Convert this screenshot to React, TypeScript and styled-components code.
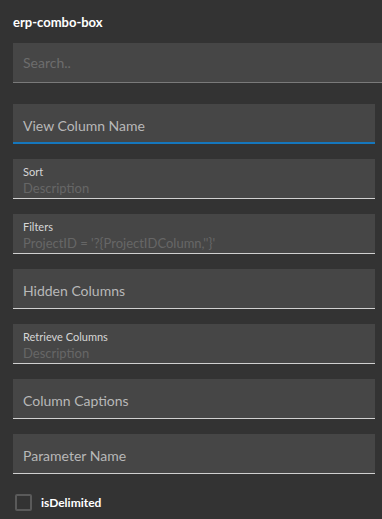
import styled, { createGlobalStyle } from 'styled-components'

const Global = createGlobalStyle`
  html, body {
    margin: 0;
    padding: 0;
    background: #333333;
  }
  body {
    font-family: Lato, "Open Sans", sans-serif;
  }
`

const Panel = styled.div`
  width: 382px;
  height: 519px;
  box-sizing: border-box;
  padding: 0 0 0 13px;
  background: #333333;
  overflow: hidden;
`

const Title = styled.div`
  height: 43px;
  line-height: 44px;
  color: #ffffff;
  font-size: 13px;
  font-weight: bold;
`

const Search = styled.div`
  height: 40px;
  box-sizing: border-box;
  background: #464646;
  border-bottom: 1px solid #7a7a7a;
  padding: 0 10px;
  display: flex;
  align-items: center;
  color: #6d6d6d;
  font-size: 14px;
  margin-bottom: 21px;
`

const Fields = styled.div`
  display: flex;
  flex-direction: column;
  gap: 15px;
  width: 362px;
`

const Field = styled.div<{ $active?: boolean }>`
  height: 40px;
  box-sizing: border-box;
  background: #464646;
  border-bottom: ${(p) => (p.$active ? '2px solid #1577bd' : '1px solid #d0d0d0')};
  padding: 0 10px;
  display: flex;
  flex-direction: column;
  justify-content: center;
`

const Placeholder = styled.div`
  color: #b8b8b8;
  font-size: 14px;
  padding-top: 4px;
`

const Label = styled.div`
  color: #d6d6d6;
  font-size: 11px;
  line-height: 14px;
  padding-top: 3px;
`

const Value = styled.div`
  color: #666666;
  font-size: 13px;
  line-height: 16px;
  padding-top: 1px;
`

const CheckRow = styled.label`
  display: flex;
  align-items: center;
  gap: 9px;
  margin-top: 20px;
  padding-left: 2px;
  color: #ffffff;
  font-size: 12px;
  font-weight: bold;
`

const Box = styled.span`
  width: 17px;
  height: 17px;
  box-sizing: border-box;
  border: 2px solid #5a5a5a;
  border-radius: 2px;
`

export default function App() {
  return (
    <>
      <Global />
      <Panel>
        <Title>erp-combo-box</Title>
        <Search>Search..</Search>
        <Fields>
          <Field $active>
            <Placeholder>View Column Name</Placeholder>
          </Field>
          <Field>
            <Label>Sort</Label>
            <Value>Description</Value>
          </Field>
          <Field>
            <Label>Filters</Label>
            <Value>ProjectID = '?{'{'}ProjectIDColumn,''{'}'}'</Value>
          </Field>
          <Field>
            <Placeholder>Hidden Columns</Placeholder>
          </Field>
          <Field>
            <Label>Retrieve Columns</Label>
            <Value>Description</Value>
          </Field>
          <Field>
            <Placeholder>Column Captions</Placeholder>
          </Field>
          <Field>
            <Placeholder>Parameter Name</Placeholder>
          </Field>
        </Fields>
        <CheckRow>
          <Box />
          isDelimited
        </CheckRow>
      </Panel>
    </>
  )
}
